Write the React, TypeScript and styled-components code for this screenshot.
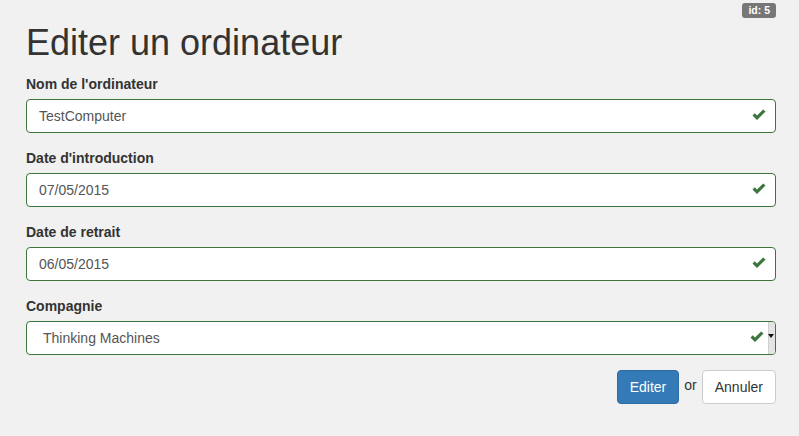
import React from "react";
import styled, { createGlobalStyle } from "styled-components";

const GlobalStyle = createGlobalStyle`
  html, body {
    margin: 0;
    padding: 0;
    background: #f1f1f1;
    font-family: "Liberation Sans", Arial, sans-serif;
    color: #333;
  }
`;

const Page = styled.div`
  width: 750px;
  padding: 3px 23px 0 26px;
`;

const TopBar = styled.div`
  display: flex;
  justify-content: flex-end;
`;

const Badge = styled.span`
  display: inline-block;
  height: 15px;
  line-height: 15px;
  padding: 0 6px;
  border-radius: 3px;
  background: #777;
  color: #fff;
  font-size: 10.5px;
  font-weight: bold;
`;

const Title = styled.h1`
  margin: 5px 0 11px;
  font-size: 36px;
  font-weight: 500;
  line-height: 1.1;
  color: #333;
`;

const Group = styled.div`
  margin-bottom: 15px;
`;

const Label = styled.label`
  display: block;
  margin-bottom: 5px;
  font-size: 14px;
  font-weight: bold;
  line-height: 20px;
`;

const Field = styled.div<{ $select?: boolean }>`
  position: relative;
  height: 34px;
  box-sizing: border-box;
  border: 1px solid #3c763d;
  border-radius: 4px;
  background: #fff;
  padding: 0 ${(p) => (p.$select ? "40px 0 16px" : "40px 0 12px")};
  display: flex;
  align-items: center;
  font-size: 14px;
  color: #555;
`;

const Check = styled.span<{ $shift?: number }>`
  position: absolute;
  right: ${(p) => 9 + (p.$shift || 0)}px;
  top: 9px;
  display: flex;
`;

const SelectArrow = styled.span`
  position: absolute;
  right: 0;
  top: 0;
  bottom: 0;
  width: 6px;
  background: #e4e4e4;
  border-left: 1px solid #d0d0d0;
  border-radius: 0 3px 3px 0;
  display: flex;
  align-items: center;
  justify-content: center;

  &::after {
    content: "";
    margin-top: -4px;
    margin-left: -3px;
    border-left: 3px solid transparent;
    border-right: 3px solid transparent;
    border-top: 4px solid #111;
  }
`;

const Actions = styled.div`
  display: flex;
  justify-content: flex-end;
  align-items: center;
  gap: 5px;
  font-size: 14px;
`;

const Or = styled.span`
  margin: 0 0 4px;
  color: #333;
`;

const Button = styled.button<{ $primary?: boolean }>`
  height: 34px;
  padding: 0 12px;
  border-radius: 4px;
  font-family: "Liberation Sans", Arial, sans-serif;
  font-size: 14px;
  border: 1px solid ${(p) => (p.$primary ? "#2e6da4" : "#ccc")};
  background: ${(p) => (p.$primary ? "#337ab7" : "#fff")};
  color: ${(p) => (p.$primary ? "#fff" : "#333")};
`;

function CheckIcon() {
  return (
    <svg width="14" height="12" viewBox="0 0 14 12">
      <path d="M0.5 6.5 L2.8 4.3 L5 6.6 L11.2 0.4 L13.5 2.6 L5 11.1 Z" fill="#3c763d" />
    </svg>
  );
}

const fields = [
  { label: "Nom de l'ordinateur", value: "TestComputer" },
  { label: "Date d'introduction", value: "07/05/2015" },
  { label: "Date de retrait", value: "06/05/2015" },
];

export default function App() {
  return (
    <Page>
      <GlobalStyle />
      <TopBar>
        <Badge>id: 5</Badge>
      </TopBar>
      <Title>Editer un ordinateur</Title>
      {fields.map((f) => (
        <Group key={f.label}>
          <Label>{f.label}</Label>
          <Field>
            {f.value}
            <Check>
              <CheckIcon />
            </Check>
          </Field>
        </Group>
      ))}
      <Group>
        <Label>Compagnie</Label>
        <Field $select>
          Thinking Machines
          <Check $shift={2}>
            <CheckIcon />
          </Check>
          <SelectArrow />
        </Field>
      </Group>
      <Actions>
        <Button $primary>Editer</Button>
        <Or>or</Or>
        <Button>Annuler</Button>
      </Actions>
    </Page>
  );
}
